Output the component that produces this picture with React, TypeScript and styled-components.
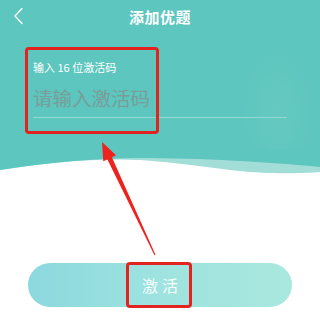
import styled, { createGlobalStyle } from 'styled-components'

const GlobalStyle = createGlobalStyle`
  html, body {
    margin: 0;
    padding: 0;
    background: #ffffff;
  }
  body {
    font-family: "Noto Sans", "Noto Sans CJK SC", sans-serif;
  }
`;

const Page = styled.div`
  position: relative;
  width: 320px;
  height: 316px;
  overflow: hidden;
  background: #ffffff;
`;

const Header = styled.div`
  height: 150px;
  background:
    radial-gradient(ellipse 40px 70px at 278px 112px, rgba(255, 255, 255, 0.05), rgba(255, 255, 255, 0) 100%),
    #5dc6be;
  display: flex;
  flex-direction: column;
`;

const NavBar = styled.div`
  height: 32px;
  display: flex;
  align-items: center;
  justify-content: center;
  position: relative;
`;

const BackButton = styled.button`
  position: absolute;
  left: 8px;
  top: 5px;
  width: 20px;
  height: 22px;
  padding: 0;
  border: none;
  background: none;
  display: flex;
  align-items: center;
  justify-content: center;
`;

const Title = styled.h1`
  margin: 0;
  font-family: "Noto Sans CJK SC", sans-serif;
  font-size: 15px;
  font-weight: 600;
  color: #ffffff;
  letter-spacing: 0.5px;
`;

const Form = styled.div`
  margin-top: 27px;
  padding: 0 33px;
  display: flex;
  flex-direction: column;
`;

const Label = styled.label`
  font-family: "Noto Sans CJK SC", sans-serif;
  font-size: 11px;
  line-height: 16px;
  color: #ffffff;
  height: 16px;
`;

const CodeInput = styled.input`
  margin-top: 10px;
  width: 254px;
  height: 26px;
  padding: 0 0 6px 0;
  border: none;
  border-bottom: 1px solid #93d9d3;
  background: transparent;
  font-family: "Noto Sans CJK SC", sans-serif;
  font-size: 19.5px;
  font-weight: 400;
  line-height: 26px;
  color: #ffffff;
  outline: none;
  box-sizing: content-box;

  &::placeholder {
    color: #789d9a;
    opacity: 1;
  }
`;

const Wave = styled.svg`
  display: block;
  width: 320px;
  height: 30px;
`;

const Body = styled.div`
  padding: 83px 28px 0;
`;

const ActivateButton = styled.button`
  width: 264px;
  height: 44px;
  border: none;
  border-radius: 22px;
  background: linear-gradient(90deg, #8cd8de 0%, #9ee3df 50%, #a9e8de 100%);
  color: rgba(255, 255, 255, 0.95);
  font-family: "Noto Sans CJK SC", sans-serif;
  font-size: 16px;
  letter-spacing: 4px;
  text-indent: 4px;
  padding: 0;
`;

const Highlight = styled.div<{ $x: number; $y: number; $w: number; $h: number }>`
  position: absolute;
  left: ${p => p.$x}px;
  top: ${p => p.$y}px;
  width: ${p => p.$w}px;
  height: ${p => p.$h}px;
  border: 3px solid #e3231f;
  border-radius: 4px;
  box-sizing: border-box;
  pointer-events: none;
`;

const ArrowLayer = styled.svg`
  position: absolute;
  left: 0;
  top: 0;
  width: 320px;
  height: 316px;
  pointer-events: none;
`;

const App = () => {
  return (
    <>
      <GlobalStyle />
      <Page>
        <Header>
          <NavBar>
            <BackButton aria-label="back">
              <svg width="16" height="20" viewBox="0 0 16 20">
                <path d="M12 2.5 L5 10 L12 17.5" fill="none" stroke="#ffffff" strokeWidth="1.4" strokeLinecap="round" strokeLinejoin="round" />
              </svg>
            </BackButton>
            <Title>添加优题</Title>
          </NavBar>
          <Form>
            <Label>输入 16 位激活码</Label>
            <CodeInput placeholder="请输入激活码" />
          </Form>
        </Header>
        <Wave viewBox="0 0 320 30" preserveAspectRatio="none">
          <path d="M0,20 C50,12 100,8 140,10 C190,13 230,22 270,23 C295,23.5 310,23 320,22 L320,0 L0,0 Z" fill="#a2ddd8" />
          <path d="M0,20 C50,12 100,8 140,8 C200,8 270,12 320,17 L320,0 L0,0 Z" fill="#5dc6be" />
        </Wave>
        <Body>
          <ActivateButton>激活</ActivateButton>
        </Body>

        <Highlight $x={25} $y={47} $w={134} $h={87} />
        <Highlight $x={126} $y={262} $w={66} $h={46} />
        <ArrowLayer viewBox="0 0 320 316">
          <polygon
            points="102,142 116,155.3 111.9,157.2 155.5,254.8 154.5,255.2 107.4,159.4 103.3,161.3"
            fill="#ef231d"
          />
        </ArrowLayer>
      </Page>
    </>
  )
}

export default App;
